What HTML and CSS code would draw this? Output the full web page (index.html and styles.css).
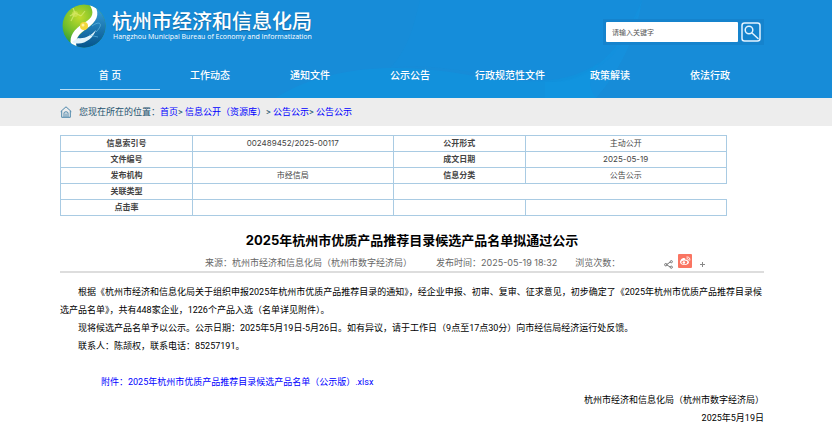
FILE: index.html
```html
<!DOCTYPE html>
<html lang="zh-CN">
<head>
<meta charset="utf-8">
<meta name="viewport" content="width=device-width, initial-scale=1">
<title>杭州市经济和信息化局</title>
<link rel="stylesheet" href="styles.css">
</head>
<body>
<header class="header">
  <svg class="header-art" viewBox="0 0 832 98" preserveAspectRatio="none" aria-hidden="true">
    <path d="M275 98C320 70 380 62 450 72C510 82 560 90 600 62C585 80 590 90 596 98Z" fill="#0d99e4" opacity=".4"/>
    <path d="M545 82C590 84 622 50 642 0C636 42 615 76 596 98H545Z" fill="#0f9de7" opacity=".3"/>
    <path d="M420 0H642C630 42 605 75 560 82C500 82 440 60 390 68C410 48 415 20 420 0Z" fill="#1191dd" opacity=".3"/>
  </svg>
  <div class="wrap masthead">
    <a class="brand" href="#">
      <svg class="emblem" viewBox="0 0 44 44" aria-hidden="true">
        <defs>
          <radialGradient id="green" cx=".4" cy=".3" r=".7"><stop offset="0" stop-color="#c3dc2b"/><stop offset=".55" stop-color="#6fbd2c"/><stop offset="1" stop-color="#159044"/></radialGradient>
          <linearGradient id="blue" x1="0" y1="0" x2="0" y2="1"><stop offset="0" stop-color="#3ba5df"/><stop offset="1" stop-color="#04538b"/></linearGradient>
          <clipPath id="ball"><circle cx="22" cy="22" r="21.5"/></clipPath>
        </defs>
        <g clip-path="url(#ball)">
          <circle cx="22" cy="22" r="22" fill="url(#green)"/>
          <path d="M30 2C38 13 32 20 23 26C16 31 12 37 15 44H44V0Z" fill="url(#blue)"/>
          <path d="M27 0C33 8 31 14 22 19C12 25 7 32 9 41L15 44C12 35 17 30 24 25C35 18 38 10 33 2Z" fill="#fff"/>
          <path d="M10 38C20 43 31 35 34 26C29 32 22 35 16 34Z" fill="#e2f4fb"/>
          <path d="M8 12L13 9L19 12M13 9L11 4M9 17L13 9M19 12L23 7" fill="none" stroke="#d7ec78" stroke-width="1.2" opacity=".7"/>
          <circle cx="13" cy="10" r="3" fill="#d9e75c" opacity=".6"/>
          <path d="M30 22C38 16 42 20 34 28M27 31L36 33" fill="none" stroke="#74c8ed" stroke-width=".8" opacity=".7"/>
          <circle cx="22" cy="22" r="4" fill="#f4d739"/>
          <circle cx="21" cy="21" r="1.5" fill="#fff3a1"/>
        </g>
      </svg>
      <span class="brand-text">
        <span class="brand-name">杭州市经济和信息化局</span>
        <span class="brand-en">Hangzhou Municipal Bureau of Economy and Informatization</span>
      </span>
    </a>
    <form class="search">
      <input class="search-input" type="text" placeholder="请输入关键字" aria-label="请输入关键字">
      <button class="search-button" type="button" aria-label="搜索">
        <svg viewBox="0 0 20 20" aria-hidden="true"><rect x="1" y="1" width="18" height="18" rx="2.5"/><circle cx="8" cy="8" r="3.8"/><path d="M11 11L17 16.5"/></svg>
      </button>
    </form>
  </div>
  <nav class="nav">
    <a class="nav-link current" href="#">首 页</a>
    <a class="nav-link" href="#">工作动态</a>
    <a class="nav-link" href="#">通知文件</a>
    <a class="nav-link" href="#">公示公告</a>
    <a class="nav-link" href="#">行政规范性文件</a>
    <a class="nav-link" href="#">政策解读</a>
    <a class="nav-link" href="#">依法行政</a>
  </nav>
</header>
<div class="location">
  <div class="wrap crumbs">
    <svg class="home" viewBox="0 0 12 12" aria-hidden="true"><path d="M.7 5.6L6 .8L11.3 5.6M1.7 5V11.3H10.3V5M4 11V7Q4 5.8 6 5.8T8 7V11M6 7.5V11"/></svg>
    <span>您现在所在的位置：<a href="#">首页</a>&gt; <a href="#">信息公开（资源库）</a>&gt; <a href="#">公告公示</a>&gt; <a href="#">公告公示</a></span>
  </div>
</div>
<main class="wrap">
  <table class="info">
    <colgroup><col class="c-label"><col class="c-value"><col class="c-label"><col class="c-value"></colgroup>
    <tr><th>信息索引号</th><td>002489452/2025-00117</td><th>公开形式</th><td>主动公开</td></tr>
    <tr><th>文件编号</th><td></td><th>成文日期</th><td>2025-05-19</td></tr>
    <tr><th>发布机构</th><td>市经信局</td><th>信息分类</th><td>公告公示</td></tr>
    <tr><th>关联类型</th><td></td><td class="open" colspan="2"></td></tr>
    <tr><th>点击率</th><td></td><td></td><td></td></tr>
  </table>
  <article>
    <h1 class="title">2025年杭州市优质产品推荐目录候选产品名单拟通过公示</h1>
    <div class="meta">
      <span class="source">来源：杭州市经济和信息化局（杭州市数字经济局）</span>
      <span>发布时间：2025-05-19 18:32</span>
      <span>浏览次数：</span>
      <span class="share">
        <svg class="share-icon" viewBox="0 0 9 9" aria-hidden="true"><path d="M6.3 2L2.5 4.7L6.3 7.1"/><circle cx="7.3" cy="1.7" r="1.1"/><circle cx="1.8" cy="4.7" r="1.2"/><circle cx="7.3" cy="7.2" r="1.1"/></svg>
        <a class="weibo" href="#" aria-label="微博"><svg viewBox="0 0 14 14" aria-hidden="true"><path d="M6 4C4.500 3.500 2 6 2 8C2 10 4 11 6.500 11C9.500 11 11 9.300 11 8.200C11 7.300 10.300 7 9.700 6.800C10 5.600 9 5.300 7.500 6C7.700 5 7.200 4.200 6 4Z" fill="#fff"/><ellipse cx="6.300" cy="8.300" rx="3" ry="1.900" fill="#fa7562"/><circle cx="5.900" cy="8.500" r="1.300" fill="#fff"/><path d="M8.800 3C11 2.500 12.500 4.400 11.800 6.300M9 4.600C10 4.400 10.600 5 10.400 6" fill="none" stroke="#fff" stroke-width=".9" stroke-linecap="round"/></svg></a>
        <a class="more" href="#" aria-label="更多"><svg viewBox="0 0 5 5" aria-hidden="true"><path d="M2.500 0V5M0 2.500H5"/></svg></a>
      </span>
    </div>
    <div class="content">
      <p>根据《杭州市经济和信息化局关于组织申报2025年杭州市优质产品推荐目录的通知》，经企业申报、初审、复审、征求意见，初步确定了《2025年杭州市优质产品推荐目录候选产品名单》，共有448家企业，1226个产品入选（名单详见附件）。</p>
      <p>现将候选产品名单予以公示。公示日期：2025年5月19日-5月26日。如有异议，请于工作日（9点至17点30分）向市经信局经济运行处反馈。</p>
      <p>联系人：陈颉权，联系电话：85257191。</p>
      <a class="attachment" href="#">附件：2025年杭州市优质产品推荐目录候选产品名单（公示版）.xlsx</a>
      <div class="sign">杭州市经济和信息化局（杭州市数字经济局）</div>
      <div class="sign">2025年5月19日</div>
    </div>
  </article>
</main>
</body>
</html>
```

FILE: styles.css
```css
* { box-sizing: border-box; }
body {
  margin: 0;
  background: #fff;
  color: #000;
  font: 9px/18px Inter, "Noto Sans CJK SC", sans-serif;
}
a { text-decoration: none; }
svg { display: block; }
.wrap { padding: 0 68px 0 60px; }

.header {
  position: relative;
  background: #178cd8;
}
.header-art {
  position: absolute;
  inset: 0;
  width: 100%;
  height: 100%;
}
.masthead {
  position: relative;
  display: flex;
  justify-content: space-between;
  align-items: flex-start;
  height: 60px;
}
.brand {
  display: flex;
  gap: 6px;
  padding: 4px 0 0 2px;
  color: #fff;
}
.emblem { width: 44px; height: 44px; }
.brand-text { padding-top: 7px; }
.brand-name {
  display: block;
  font-size: 20px;
  line-height: 22px;
  font-weight: 500;
  text-shadow: 0 1px 1px #176aa3;
}
.brand-en {
  display: block;
  padding-left: 1px;
  font: 7px/8px "Open Sans", sans-serif;
}
.search {
  display: flex;
  gap: 3px;
  margin-top: 19px;
  padding: 3px;
  background: #1583cd;
}
.search-input {
  width: 132px;
  height: 20px;
  padding: 0 6px;
  border: 0;
  border-radius: 1px;
  background: #fff;
  font: 7px/20px "Noto Sans CJK SC", sans-serif;
}
.search-input::placeholder { color: #555; }
.search-button {
  width: 20px;
  height: 20px;
  padding: 0;
  border: 0;
  background: none;
}
.search-button svg { fill: none; stroke: #e3f3ff; stroke-width: 1.5; stroke-linecap: round; }

.nav {
  position: relative;
  display: grid;
  grid-template-columns: repeat(7, 1fr);
  height: 38px;
  padding: 0 72px 0 60px;
}
.nav-link {
  height: 30px;
  border-bottom: 1px solid transparent;
  color: #fff;
  font-size: 10px;
  line-height: 31px;
  font-weight: 500;
  text-align: center;
}
.current { border-color: #b9def5; }

.location { background: #ededed; }
.crumbs {
  display: flex;
  align-items: center;
  gap: 7px;
  height: 28px;
  color: #24536f;
  font-family: Roboto, "Noto Sans CJK SC", sans-serif;
}
.crumbs a { color: #00f; }
.home { width: 12px; height: 12px; fill: none; stroke: #4c86ab; stroke-width: 1; }

.info {
  width: 94.7%;
  margin-top: 9px;
  border-collapse: collapse;
  table-layout: fixed;
  color: #444;
  font-size: 8px;
  line-height: 15px;
}
.info th, .info td {
  height: 16px;
  padding: 0;
  border: 1px solid #a9cbe3;
  text-align: center;
}
.info th { font-weight: 700; }
.info .open { border-right-color: transparent; }
.c-label { width: 19.8%; }
.c-value { width: 30.2%; }

.title {
  margin: 15px 0 0;
  font-size: 13px;
  line-height: 18px;
  font-weight: 700;
  text-align: center;
}
.meta {
  display: flex;
  gap: 18px;
  height: 24px;
  padding: 5px 0 0 145px;
  border-bottom: 2px solid #ddd;
  color: #666;
}
.source { margin-right: 6px; }
.share {
  display: flex;
  align-items: flex-start;
  gap: 5px;
  margin-left: 26px;
}
.share-icon { width: 9px; height: 9px; margin-top: 6px; fill: none; stroke: #777; stroke-width: 1; }
.weibo { width: 14px; height: 14px; border-radius: 1px; background: #fa7562; }
.more svg { width: 5px; height: 5px; margin: 8px 0 0 3px; stroke: #888; }

.content {
  padding-top: 10px;
  font-family: Roboto, "Noto Sans CJK SC", sans-serif;
}
.content p { margin: 0; text-indent: 2em; }
.attachment {
  display: block;
  margin: 18px 0 0 41px;
  color: #00f;
}
.sign { text-align: right; }
```
